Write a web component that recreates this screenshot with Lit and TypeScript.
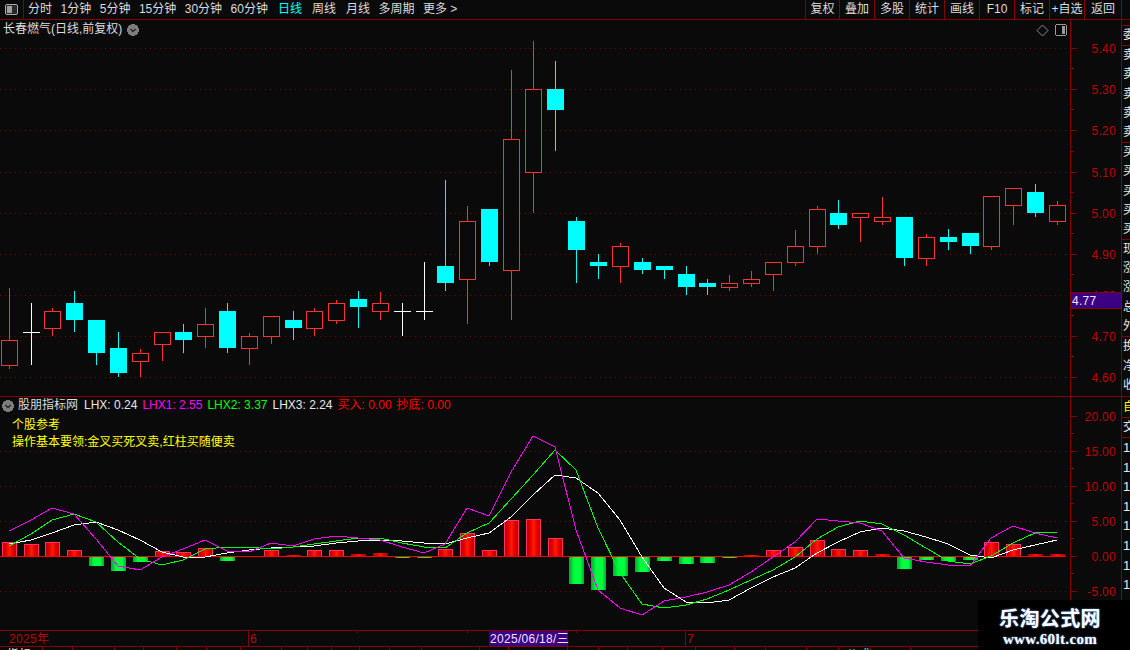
import { LitElement, html, css, svg } from "lit";
import { customElement } from "lit/decorators.js";

type Candle = [string, number, number, number, number];
const W = [9,31,52,74,96,118,140,162,183,205,227,249,271,293,314,336,358,380,402,424,445,467,489,511,533,555,576,598,620,642,664,686,707,729,751,773,795,817,838,860,882,904,926,948,970,991,1013,1035,1057];
const CANDLES: Candle[] = [
  ["r",288,340,365,369],["w",303,332,332,365],["r",308,311,328,336],["c",291,303,320,332],["c",320,320,353,365],
  ["c",332,348,373,377],["r",349,353,361,377],["r",332,332,344,361],["c",324,332,340,353],["r",308,324,336,348],
  ["c",303,311,348,353],["r",333,336,348,365],["r",316,316,336,344],["c",311,320,328,340],["r",308,311,328,336],
  ["r",300,303,320,324],["c",291,299,307,328],["r",292,303,311,320],["w",303,311,311,336],["w",262,311,311,320],
  ["c",180,266,283,291],["r",206,221,279,324],["c",209,209,262,266],["r",70,139,270,320],["r",41,89,172,213],
  ["c",61,89,110,151],["c",217,221,250,283],["c",254,262,266,279],["r",243,246,266,283],["c",258,262,270,274],
  ["c",266,266,270,279],["c",266,274,287,295],["c",279,283,287,295],["r",275,283,287,291],["r",271,279,283,287],
  ["r",262,262,274,291],["r",230,246,262,266],["r",206,209,246,254],["c",200,213,225,229],["r",213,213,217,242],
  ["r",197,217,221,225],["c",217,217,258,266],["r",234,237,258,266],["c",229,237,242,250],["c",233,233,246,254],
  ["r",196,196,246,250],["r",188,188,205,225],["c",184,192,213,217],["r",201,205,221,225],
];
const BARS = [14,12,14,6,-9,-14,-5,5,4,8,-4,0,6,1,6,6,2,3,-1,-1,7,23,6,36,37,18,-27,-33,-19,-15,-4,-7,-6,-1,1,6,9,16,7,6,2,-12,-3,-4,-3,14,12,2,2];
const MAGENTA = [531,520,508,514,539,566,570,557,549,540,551,552,543,546,539,536,538,540,547,553,544,508,516,472,436,447,530,590,608,615,601,597,592,585,572,557,542,519,521,523,531,558,562,565,566,538,526,533,538];
const GREEN = [546,534,520,514,522,542,559,565,560,549,547,547,549,547,544,541,538,538,543,547,548,533,523,499,475,450,470,528,573,604,608,605,599,590,580,570,557,539,527,521,524,535,548,561,564,556,543,533,532];
const WHITE = [544,540,533,525,522,530,540,552,557,557,553,550,548,547,546,543,541,540,541,543,544,538,533,517,495,475,478,493,520,557,588,602,603,600,588,577,568,553,542,532,528,531,537,544,555,558,550,545,540];

const pts = (ys: number[]) => ys.map((y, i) => `${W[i]},${y}`).join(" ");
const MAIN_GRID = [48,89,130,172,213,254,295,336,377];
const MAIN_LABELS = ["5.40","5.30","5.20","5.10","5.00","4.90","4.80","4.70","4.60"];
const MAIN_MINOR = [68,109,151,192,233,274,315,356];
const SUB_GRID = [451,486,521,591];
const SUB_MAJOR: [number,string][] = [[416,"20.00"],[451,"15.00"],[486,"10.00"],[521,"5.00"],[556,"0.00"],[591,"-5.00"]];
const SUB_MINOR = [433,468,503,538,573,608];
const PERIODS = [
  ["分时",""],["1分钟",""],["5分钟",""],["15分钟",""],["30分钟",""],["60分钟","wide"],
  ["日线","wide on"],["周线","wide"],["月线",""],["多周期",""],["更多 >",""],
];
const ACTIONS = ["复权","叠加","多股","统计","画线","F10","标记","+自选","返回"];
const SIDE_GROUPS = [
  { cls: "h20", rows: [""] },
  { cls: "", rows: ["委比"] },
  { cls: "", rows: ["卖五","卖四","卖三","卖二","卖一"] },
  { cls: "", rows: ["买一","买二","买三","买四","买五"] },
  { cls: "", rows: ["现价","涨跌","涨幅","总量","外盘"] },
  { cls: "tail", rows: ["换手","净资","收益"] },
];
const QUOTE_ROWS = ["14:55","14:56","14:57","14:58","14:59","15:00","15:01","15:02","15:03","15:04"];
const TABS: [number,string,boolean][] = [
  [43,"指标 A",false],[30,"MA",false],[42,"MACD",false],[29,"DMI",false],[33,"DMA",false],[30,"FSL",false],[34,"TRIX",false],
  [41,"BRAR",false],[26,"CR",false],[24,"VR",false],[28,"OBV",false],[30,"ASI",false],[32,"EMV",false],[58,"VOL-TDX",false],
  [29,"RSI",false],[59,"WR",false],[31,"SAR",false],[29,"KDJ",false],[35,"CCI",false],[33,"ROC",false],[39,"MTM",false],
  [31,"BOLL",false],[41,"PSY",false],[32,"MCST",false],[32,"公式",true],[40,"BIAS",false],
];

const chevron = svg`<circle cx="6" cy="6" r="6" fill="#7c7c7c"></circle><path d="M3.5 4.8 6 7.3 8.5 4.8" fill="none" stroke="#2a2a2a" stroke-width="1.4"></path>`;

@customElement("app-root")
export class AppRoot extends LitElement {
  static styles = css`
    :host { display: block; width: 1130px; height: 650px; position: relative; overflow: hidden; background: #0a0a0a;
      font-family: "Liberation Sans", "Noto Sans CJK SC", sans-serif; font-size: 12px; color: #dcdcdc; }
    svg { display: block; shape-rendering: crispEdges; }
    .toolbar { display: flex; height: 20px; box-sizing: border-box; border-bottom: 1px solid #840000; padding-right: 8px; line-height: 19px; }
    .toggle { width: 24px; box-sizing: border-box; border-right: 1px solid #840000; padding: 4px 0 0 5px; }
    .periods { display: flex; gap: 8.5px; padding-left: 4px; }
    .periods .wide { margin-right: 1.5px; }
    .periods .on { color: #00ffff; }
    .actions { display: flex; margin-left: auto; border-right: 1px solid #840000; }
    .actions div { width: 35px; box-sizing: border-box; border-left: 1px solid #840000; text-align: center; white-space: nowrap; }
    .actions div:first-child { width: 34px; }
    .actions div:last-child { width: 37px; }
    .body { display: flex; height: 630px; }
    .left { width: 1121px; flex: none; }
    .pane { display: flex; position: relative; box-sizing: border-box; border-bottom: 1px solid #840000; }
    .main { height: 377px; }
    .sub { height: 234px; }
    .plot { width: 1070px; flex: none; border-right: 1px solid #840000; }
    .title { position: absolute; left: 3px; top: 1px; display: flex; align-items: center; gap: 5px; line-height: 17px; white-space: nowrap; }
    .tools { position: absolute; left: 1036px; top: 4px; display: flex; gap: 6px; }
    .legend { position: absolute; left: 2px; top: 1px; display: flex; align-items: center; white-space: nowrap; line-height: 15px; gap: 5px; }
    .legend .name { margin: 0 1px 0 -1px; }
    .m { color: #ff00ff; } .g { color: #00ff00; } .w { color: #e8e8e8; }
    .legend .r { color: #ff0000; }
    .notes { position: absolute; left: 12px; top: 20px; color: #ffff00; line-height: 17px; white-space: nowrap; }
    .date { height: 16px; box-sizing: border-box; border-bottom: 1px solid #840000; }
    .date text { font-size: 12px; fill: #c00000; letter-spacing: .3px; }
    .date text.sel { fill: #e8e8ff; }
    .strip { display: flex; height: 3px; overflow: hidden; }
    .strip div { flex: none; box-sizing: border-box; border-right: 1px solid #840000; padding-left: 7px; line-height: 16px; white-space: nowrap; overflow: hidden; color: #e8e8e8; }
    .strip .on { color: #00ffff; }
    .axis text { font-size: 12px; fill: #c00000; letter-spacing: .3px; }
    .axis text.now { fill: #e8e8ff; }
    .side { width: 9px; flex: none; box-sizing: border-box; border-left: 1px solid #840000; overflow: hidden; color: #e8e8e8; margin-top: -1px; white-space: nowrap; }
    .group { border-bottom: 1px solid #840000; padding-left: 1px; width: 40px; }
    .group div { height: 19.2px; line-height: 19px; }
    .group.h20 div { height: 6px; }
    .group.tail { height: 60px; box-sizing: border-box; }
    .group.tail div { height: 19.5px; }
    .self { height: 20px; line-height: 20px; color: #ffff00; padding-left: 1px; border-bottom: 1px solid #840000; }
    .cross { height: 19px; line-height: 19px; padding-left: 1px; border-bottom: 1px solid #840000; }
    .quotes div { height: 19.6px; line-height: 20px; padding-left: 1px; font-size: 13px; }
    .mark { position: absolute; left: 978px; top: 600px; width: 152px; height: 50px; background: #000; color: #fff; display: flex; flex-direction: column; align-items: center; padding: 9px 8px 0 0; box-sizing: border-box; text-shadow: 0 0 2px #6aa8ff; }
    .mark .cn { font-size: 20px; line-height: 20px; font-weight: 700; letter-spacing: .4px; }
    .mark .url { font-family: "Liberation Serif", serif; font-weight: 700; font-size: 15px; line-height: 14px; margin-top: 3px; letter-spacing: .35px; }
  `;

  private candles() {
    return CANDLES.map(([t, hi, top, bot, lo], i) => {
      const x = W[i];
      if (t === "w") {
        return svg`<rect x=${x} y=${hi} width="1" height=${lo - hi} fill="#fff"></rect><rect x=${x - 8} y=${top} width="17" height="1" fill="#fff"></rect>`;
      }
      const col = t === "r" ? "#ff3232" : "#00ffff";
      const wicks = svg`
        ${hi < top ? svg`<rect x=${x} y=${hi} width="1" height=${top - hi} fill=${col}></rect>` : ""}
        ${lo > bot ? svg`<rect x=${x} y=${bot} width="1" height=${lo - bot} fill=${col}></rect>` : ""}`;
      return t === "r"
        ? svg`${wicks}<rect x=${x - 7.5} y=${top + 0.5} width="16" height=${bot - top} fill="#0a0a0a" stroke=${col}></rect>`
        : svg`${wicks}<rect x=${x - 8} y=${top} width="17" height=${bot - top} fill=${col}></rect>`;
    });
  }

  private bars() {
    return BARS.map((v, i) => {
      if (!v) return "";
      const x = W[i] - 7;
      if (v > 0) {
        const y = 556 - v;
        return svg`<rect x=${x} y=${y} width="15" height=${v} fill="url(#rb)"></rect>
          ${v > 3 ? svg`<rect x=${x} y=${y} width="1" height=${v} fill="#ff3264"></rect><rect x=${x + 14} y=${y} width="1" height=${v} fill="#ff3264"></rect><rect x=${x} y=${y} width="15" height="1" fill="#ff3264"></rect>` : ""}`;
      }
      return svg`<rect x=${x} y="557" width="15" height=${-v} fill="url(#gb)"></rect>`;
    });
  }

  render() {
    return html`
      <div class="toolbar">
        <div class="toggle"><svg width="13" height="11" viewBox="0 0 13 11">
          <rect x=".5" y=".5" width="12" height="10" rx="2" fill="#2a2a2a" stroke="#a8a8a8"></rect>
          <rect x="2" y="2" width="5" height="7" fill="#a0a0a0"></rect></svg></div>
        <div class="periods">${PERIODS.map(([t, c]) => html`<div class=${c}>${t}</div>`)}</div>
        <div class="actions">${ACTIONS.map((t) => html`<div>${t}</div>`)}</div>
      </div>
      <div class="body">
        <div class="left">
          <div class="pane main">
            <div class="plot"><svg width="1070" height="376" viewBox="0 20 1070 376">
              ${MAIN_GRID.map((y) => svg`<line x1="0" x2="1070" y1=${y + 0.5} y2=${y + 0.5} stroke="#6e0000" stroke-dasharray="1 4"></line>`)}
              ${this.candles()}
            </svg></div>
            <div class="axis"><svg width="50" height="376" viewBox="1071 20 50 376">
              ${MAIN_GRID.map((y, i) => svg`<rect x="1071" y=${y} width="6" height="1" fill="#840000"></rect>
                <text x="1116" y=${y + 5} text-anchor="end">${MAIN_LABELS[i]}</text>`)}
              ${MAIN_MINOR.map((y) => svg`<rect x="1071" y=${y} width="3" height="1" fill="#840000"></rect>`)}
              <rect x="1071" y="292" width="50" height="17" fill="#3c0082"></rect>
              <rect x="1071" y="292" width="50" height="1" fill="#840000"></rect>
              <rect x="1071" y="308" width="50" height="1" fill="#840000"></rect>
              <text class="now" x="1072" y="305">4.77</text>
            </svg></div>
            <div class="title"><span>长春燃气(日线,前复权)</span><svg width="12" height="12" viewBox="0 0 12 12">${chevron}</svg></div>
            <div class="tools">
              <svg width="13" height="13" viewBox="0 0 13 13"><path d="M6.5 1 12 6.5 6.5 12 1 6.5Z" fill="none" stroke="#8a8a8a" style="shape-rendering:auto"></path></svg>
              <svg width="12" height="12" viewBox="0 0 12 12"><rect x=".5" y=".5" width="11" height="11" rx="2" fill="none" stroke="#9a9a9a"></rect><rect x="7" y="2" width="3" height="8" fill="#9a9a9a"></rect></svg>
            </div>
          </div>
          <div class="pane sub">
            <div class="plot"><svg width="1070" height="233" viewBox="0 397 1070 233">
              <defs>
                <linearGradient id="rb"><stop offset="0" stop-color="#a80000"></stop><stop offset=".3" stop-color="#e80000"></stop><stop offset=".5" stop-color="#ff1c00"></stop><stop offset=".7" stop-color="#e80000"></stop><stop offset="1" stop-color="#a80000"></stop></linearGradient>
                <linearGradient id="gb"><stop offset="0" stop-color="#00a82c"></stop><stop offset=".35" stop-color="#00ff40"></stop><stop offset=".75" stop-color="#00ff40"></stop><stop offset="1" stop-color="#00a82c"></stop></linearGradient>
              </defs>
              ${SUB_GRID.map((y) => svg`<line x1="0" x2="1070" y1=${y + 0.5} y2=${y + 0.5} stroke="#6e0000" stroke-dasharray="1 4"></line>`)}
              ${this.bars()}
              <rect x="0" y="556" width="1066" height="1" fill="#ff0000"></rect>
              <polyline points=${pts(WHITE)} fill="none" stroke="#fff"></polyline>
              <polyline points=${pts(GREEN)} fill="none" stroke="#00ff00"></polyline>
              <polyline points=${pts(MAGENTA)} fill="none" stroke="#ff00ff"></polyline>
            </svg></div>
            <div class="axis"><svg width="50" height="233" viewBox="1071 397 50 233">
              ${SUB_MAJOR.map(([y, t]) => svg`<rect x="1071" y=${y} width="6" height="1" fill="#840000"></rect>
                <text x="1116" y=${y + 5} text-anchor="end">${t}</text>`)}
              ${SUB_MINOR.map((y) => svg`<rect x="1071" y=${y} width="3" height="1" fill="#840000"></rect>`)}
            </svg></div>
            <div class="legend">
              <svg width="12" height="12" viewBox="0 0 12 12">${chevron}</svg>
              <span class="name">股朋指标网</span>
              <span class="w">LHX: 0.24</span><span class="m">LHX1: 2.55</span><span class="g">LHX2: 3.37</span>
              <span class="w">LHX3: 2.24</span><span class="r">买入: 0.00</span><span class="r">抄底: 0.00</span>
            </div>
            <div class="notes"><div>个股参考</div><div>操作基本要领:金叉买死叉卖,红柱买随便卖</div></div>
          </div>
          <div class="date"><svg width="1121" height="15" viewBox="0 631 1121 15">
            <text x="9" y="643">2025年</text>
            <rect x="248" y="631" width="1" height="15" fill="#840000"></rect><text x="250" y="643">6</text>
            <rect x="357" y="631" width="1" height="2" fill="#840000"></rect>
            <rect x="467" y="631" width="1" height="2" fill="#840000"></rect>
            <rect x="489" y="631" width="78" height="15" fill="#3c0082"></rect>
            <rect x="567" y="631" width="1" height="15" fill="#840000"></rect>
            <text class="sel" x="490" y="643">2025/06/18/三</text>
            <rect x="576" y="631" width="1" height="2" fill="#840000"></rect>
            <rect x="685" y="631" width="1" height="15" fill="#840000"></rect><text x="687" y="643">7</text>
          </svg></div>
          <div class="strip">${TABS.map(([w, t, on]) => html`<div class=${on ? "on" : ""} style="width:${w}px">${t}</div>`)}</div>
        </div>
        <div class="side">
          ${SIDE_GROUPS.map((g) => html`<div class="group ${g.cls}">${g.rows.map((r) => html`<div>${r}</div>`)}</div>`)}
          <div class="self">自选</div>
          <div class="cross">交易</div>
          <div class="quotes">${QUOTE_ROWS.map((q) => html`<div>${q}</div>`)}</div>
        </div>
      </div>
      <div class="mark"><div class="cn">乐淘公式网</div><div class="url">www.60lt.com</div></div>
    `;
  }
}
